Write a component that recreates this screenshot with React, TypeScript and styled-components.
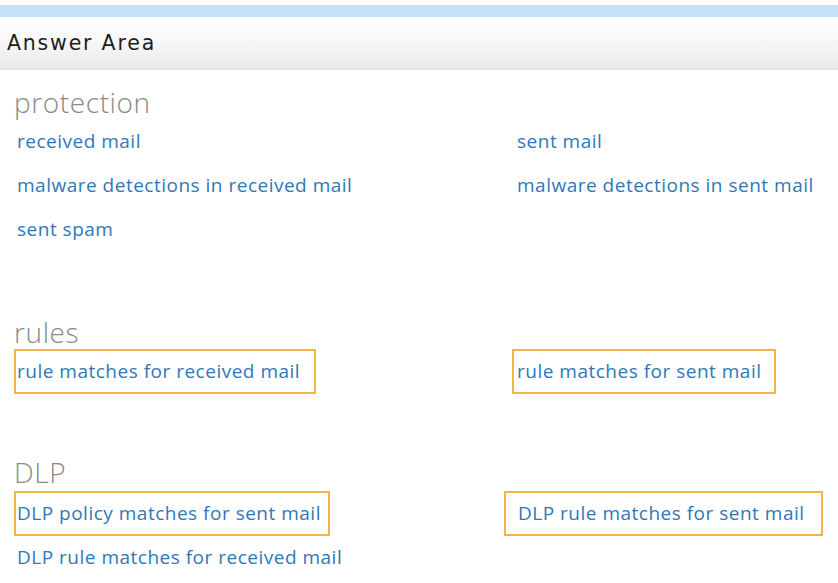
import React from "react";
import styled, { createGlobalStyle } from "styled-components";

const Global = createGlobalStyle`
  html, body { margin: 0; padding: 0; background: #ffffff; }
  body { font-family: "Open Sans", "Noto Sans", "DejaVu Sans", sans-serif; }
`;

const Page = styled.div`
  width: 838px;
  height: 583px;
  overflow: hidden;
  background: #fff;
  padding-top: 5px;
  box-sizing: border-box;
`;

const TopBar = styled.div`
  height: 12px;
  background: #c6e2fa;
`;

const Header = styled.div`
  height: 52px;
  display: flex;
  align-items: center;
  padding-left: 7px;
  background: linear-gradient(to bottom, #ffffff 0%, #f6f6f6 50%, #e9e9e9 100%);
  border-bottom: 1px solid #e2e2e2;
  font-family: "DejaVu Sans", "Open Sans", sans-serif;
  font-size: 20.5px;
  letter-spacing: 1.8px;
  color: #1e1e1e;
`;

const Content = styled.div`
  padding-left: 14px;
`;

const Section = styled.section<{ $top: number }>`
  margin-top: ${(p) => p.$top}px;
`;

const Heading = styled.h2`
  margin: 0;
  font-size: 28px;
  font-weight: 300;
  line-height: 33px;
  color: #8a8a8a;
  letter-spacing: 0.6px;
`;

const Grid = styled.div<{ $gap?: number }>`
  display: grid;
  grid-template-columns: 500px 1fr;
  grid-auto-rows: 44px;
  margin-top: ${(p) => p.$gap ?? 0}px;
`;

const Cell = styled.div`
  display: flex;
  align-items: center;
`;

const Link = styled.a`
  font-size: 19px;
  letter-spacing: 0.5px;
  color: #2f78b8;
  text-decoration: none;
  padding-left: 3px;
  white-space: nowrap;
  cursor: pointer;
`;

const Target = styled.div<{ $width: number; $shift: number; $pad: number }>`
  box-sizing: border-box;
  flex: none;
  width: ${(p) => p.$width}px;
  height: 45px;
  margin-left: ${(p) => p.$shift}px;
  padding-left: ${(p) => p.$pad}px;
  border: 2px solid #f2b648;
  display: flex;
  align-items: center;
  font-size: 19px;
  letter-spacing: 0.5px;
  color: #2f78b8;
  white-space: nowrap;
`;

export default function App() {
  return (
    <Page>
      <Global />
      <TopBar />
      <Header>Answer Area</Header>
      <Content>
        <Section $top={16}>
          <Heading>protection</Heading>
          <Grid>
            <Cell><Link>received mail</Link></Cell>
            <Cell><Link>sent mail</Link></Cell>
            <Cell><Link>malware detections in received mail</Link></Cell>
            <Cell><Link>malware detections in sent mail</Link></Cell>
            <Cell><Link>sent spam</Link></Cell>
            <Cell />
          </Grid>
        </Section>
        <Section $top={65}>
          <Heading>rules</Heading>
          <Grid>
            <Cell>
              <Target $width={302} $shift={0} $pad={1}>rule matches for received mail</Target>
            </Cell>
            <Cell>
              <Target $width={264} $shift={-2} $pad={3}>rule matches for sent mail</Target>
            </Cell>
          </Grid>
        </Section>
        <Section $top={63}>
          <Heading>DLP</Heading>
          <Grid $gap={2}>
            <Cell>
              <Target $width={316} $shift={0} $pad={1}>DLP policy matches for sent mail</Target>
            </Cell>
            <Cell>
              <Target $width={319} $shift={-10} $pad={12}>DLP rule matches for sent mail</Target>
            </Cell>
            <Cell><Link>DLP rule matches for received mail</Link></Cell>
            <Cell />
          </Grid>
        </Section>
      </Content>
    </Page>
  );
}
